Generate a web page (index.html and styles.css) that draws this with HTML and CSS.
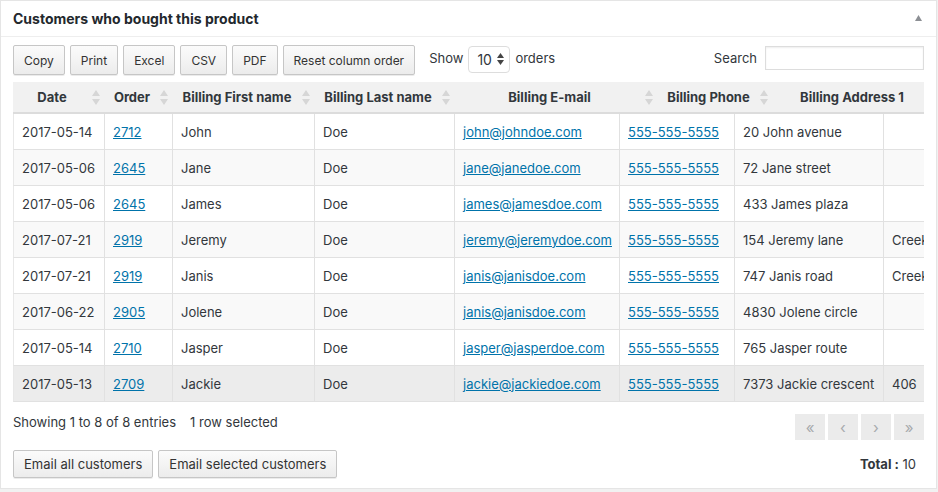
FILE: index.html
```html
<!DOCTYPE html>
<html lang="en">
<head>
<meta charset="utf-8">
<title>Customers who bought this product</title>
<link rel="stylesheet" href="styles.css">
</head>
<body>
<div class="postbox">
  <div class="hndle">
    <h2 class="hndle-title">Customers who bought this product</h2>
    <svg class="toggle" width="7" height="6" viewBox="0 0 7 6"><polygon points="0,6 3.5,0 7,6" fill="#8c8f94"/></svg>
  </div>
  <div class="inside">
    <div class="toolbar">
      <div class="dt-buttons">
        <button class="btn">Copy</button>
        <button class="btn">Print</button>
        <button class="btn">Excel</button>
        <button class="btn">CSV</button>
        <button class="btn">PDF</button>
        <button class="btn">Reset column order</button>
      </div>
      <div class="length">
        <span>Show</span>
        <div class="select"><span>10</span>
          <svg width="7" height="12" viewBox="0 0 7 12"><polygon points="0,5 3.5,0 7,5" fill="#444"/><polygon points="0,7 7,7 3.5,12" fill="#444"/></svg>
        </div>
        <span>orders</span>
      </div>
      <div class="filter">
        <span>Search</span>
        <input class="search" type="text">
      </div>
    </div>

    <div class="scroll">
      <table class="head-table">
        <colgroup>
          <col class="h1"><col class="h2"><col class="h3"><col class="h4"><col class="h5"><col class="h6"><col class="h7"><col class="h8">
        </colgroup>
        <thead>
          <tr>
            <th><div class="th-in"><span class="lbl">Date</span><svg class="sort" width="8" height="15" viewBox="0 0 8 15"><polygon points="0,6 4,0 8,6" /><polygon points="0,9 8,9 4,15"/></svg></div></th>
            <th><div class="th-in"><span class="lbl">Order</span><svg class="sort" width="8" height="15" viewBox="0 0 8 15"><polygon points="0,6 4,0 8,6" /><polygon points="0,9 8,9 4,15"/></svg></div></th>
            <th><div class="th-in"><span class="lbl">Billing First name</span><svg class="sort" width="8" height="15" viewBox="0 0 8 15"><polygon points="0,6 4,0 8,6" /><polygon points="0,9 8,9 4,15"/></svg></div></th>
            <th><div class="th-in"><span class="lbl">Billing Last name</span><svg class="sort" width="8" height="15" viewBox="0 0 8 15"><polygon points="0,6 4,0 8,6" /><polygon points="0,9 8,9 4,15"/></svg></div></th>
            <th><div class="th-in"><span class="lbl">Billing E-mail</span><svg class="sort" width="8" height="15" viewBox="0 0 8 15"><polygon points="0,6 4,0 8,6" /><polygon points="0,9 8,9 4,15"/></svg></div></th>
            <th><div class="th-in"><span class="lbl">Billing Phone</span><svg class="sort" width="8" height="15" viewBox="0 0 8 15"><polygon points="0,6 4,0 8,6" /><polygon points="0,9 8,9 4,15"/></svg></div></th>
            <th><div class="th-in"><span class="lbl">Billing Address 1</span><svg class="sort" width="8" height="15" viewBox="0 0 8 15"><polygon points="0,6 4,0 8,6" /><polygon points="0,9 8,9 4,15"/></svg></div></th>
            <th></th>
          </tr>
        </thead>
      </table>
      <table class="body-table">
        <colgroup>
          <col class="c1"><col class="c2"><col class="c3"><col class="c4"><col class="c5"><col class="c6"><col class="c7"><col class="c8">
        </colgroup>
        <tbody>
          <tr><td>2017-05-14</td><td><a href="#">2712</a></td><td>John</td><td>Doe</td><td><a href="#">john@johndoe.com</a></td><td><a href="#">555-555-5555</a></td><td>20 John avenue</td><td></td></tr>
          <tr class="alt"><td>2017-05-06</td><td><a href="#">2645</a></td><td>Jane</td><td>Doe</td><td><a href="#">jane@janedoe.com</a></td><td><a href="#">555-555-5555</a></td><td>72 Jane street</td><td></td></tr>
          <tr><td>2017-05-06</td><td><a href="#">2645</a></td><td>James</td><td>Doe</td><td><a href="#">james@jamesdoe.com</a></td><td><a href="#">555-555-5555</a></td><td>433 James plaza</td><td></td></tr>
          <tr class="alt"><td>2017-07-21</td><td><a href="#">2919</a></td><td>Jeremy</td><td>Doe</td><td><a href="#">jeremy@jeremydoe.com</a></td><td><a href="#">555-555-5555</a></td><td>154 Jeremy lane</td><td>Creek</td></tr>
          <tr><td>2017-07-21</td><td><a href="#">2919</a></td><td>Janis</td><td>Doe</td><td><a href="#">janis@janisdoe.com</a></td><td><a href="#">555-555-5555</a></td><td>747 Janis road</td><td>Creek</td></tr>
          <tr class="alt"><td>2017-06-22</td><td><a href="#">2905</a></td><td>Jolene</td><td>Doe</td><td><a href="#">janis@janisdoe.com</a></td><td><a href="#">555-555-5555</a></td><td>4830 Jolene circle</td><td></td></tr>
          <tr><td>2017-05-14</td><td><a href="#">2710</a></td><td>Jasper</td><td>Doe</td><td><a href="#">jasper@jasperdoe.com</a></td><td><a href="#">555-555-5555</a></td><td>765 Jasper route</td><td></td></tr>
          <tr class="selected"><td>2017-05-13</td><td><a href="#">2709</a></td><td>Jackie</td><td>Doe</td><td><a href="#">jackie@jackiedoe.com</a></td><td><a href="#">555-555-5555</a></td><td>7373 Jackie crescent</td><td>406</td></tr>
        </tbody>
      </table>
    </div>

    <div class="footer-row">
      <div class="info">Showing 1 to 8 of 8 entries<span class="sel">1 row selected</span></div>
      <div class="paginate">
        <span class="pg">«</span>
        <span class="pg">‹</span>
        <span class="pg">›</span>
        <span class="pg">»</span>
      </div>
    </div>

    <div class="actions-row">
      <div class="actions">
        <button class="btn btn-lg">Email all customers</button>
        <button class="btn btn-lg">Email selected customers</button>
      </div>
      <div class="total"><b>Total :</b> 10</div>
    </div>
  </div>
</div>
</body>
</html>
```
FILE: styles.css
```css
* { box-sizing: border-box; }

body {
  margin: 0;
  background: #f1f1f1;
  font-family: Inter, "Liberation Sans", Arial, sans-serif;
  font-size: 13px;
  color: #32373c;
}

.postbox {
  width: 937px;
  background: #fff;
  border: 1px solid #e5e5e5;
}

.hndle {
  height: 36px;
  border-bottom: 1px solid #eee;
  display: flex;
  align-items: center;
  justify-content: space-between;
  padding: 0 14px 0 12px;
}

.hndle-title {
  margin: 0;
  font-size: 14px;
  font-weight: 700;
  color: #23282d;
}

.toggle { display: block; margin-top: -2px; }

.inside {
  padding: 8px 12px 10px 12px;
}

.toolbar {
  display: flex;
  align-items: center;
  height: 30px;
  margin-bottom: 7px;
}

.dt-buttons { display: flex; gap: 5px; }

.btn {
  font-family: inherit;
  font-size: 12px;
  color: #333;
  height: 30px;
  padding: 0 10px;
  border: 1px solid #c6c6c6;
  border-radius: 2px;
  background: linear-gradient(to bottom, #fbfbfb 0%, #ececec 100%);
  box-shadow: 0 1px 0 rgba(0,0,0,0.08);
}

.length {
  display: flex;
  align-items: center;
  margin-left: 14px;
  gap: 5px;
  margin-top: -4px;
}

.select {
  width: 42px;
  height: 27px;
  border: 1px solid #ddd;
  border-radius: 4px;
  display: flex;
  align-items: center;
  justify-content: space-between;
  padding: 0 5px 0 8px;
  font-size: 14px;
  color: #32373c;
  margin-top: 2px;
}

.select svg { display: block; }

.filter {
  margin-left: auto;
  display: flex;
  align-items: center;
  gap: 8px;
  margin-top: -4px;
}

.search {
  width: 159px;
  height: 24px;
  border: 1px solid #ddd;
  box-shadow: inset 0 1px 2px rgba(0,0,0,0.07);
  background: #fff;
  font-family: inherit;
}

.scroll {
  width: 100%;
  overflow: hidden;
}

table {
  border-collapse: separate;
  border-spacing: 0;
  table-layout: fixed;
}

.head-table { width: 1082px; }
.h1 { width: 92px; }
.h2 { width: 68px; }
.h3 { width: 142px; }
.h4 { width: 140px; }
.h5 { width: 203px; }
.h6 { width: 115px; }
.h7 { width: 172px; }
.h8 { width: 150px; }

.head-table th {
  background: #f1f1f1;
  border-bottom: 2px solid #dcdcdc;
  height: 32px;
  padding: 0 5px 0 7px;
  font-weight: 700;
  font-size: 13px;
  color: #32373c;
  white-space: nowrap;
  overflow: hidden;
}

.th-in {
  display: flex;
  align-items: center;
}

.lbl {
  flex: 1;
  text-align: center;
  margin-right: 8px;
}

.sort { display: block; flex: none; }
.sort polygon { fill: #d6d6d6; }

.body-table { width: 1021px; }
.c1 { width: 92px; }
.c2 { width: 68px; }
.c3 { width: 142px; }
.c4 { width: 140px; }
.c5 { width: 165px; }
.c6 { width: 115px; }
.c7 { width: 149px; }
.c8 { width: 150px; }

.body-table td {
  height: 36px;
  padding: 0 8px;
  border-right: 1px solid #e1e1e1;
  border-bottom: 1px solid #e1e1e1;
  white-space: nowrap;
  overflow: hidden;
}

.body-table td:first-child { border-left: 1px solid #e8e8e8; }

.body-table tr.alt td { background: #f9f9f9; }
.body-table tr.selected td { background: #ececec; }

a { color: #0073aa; text-decoration: underline; }

.footer-row {
  display: flex;
  justify-content: space-between;
  align-items: flex-start;
  margin-top: 12px;
}

.info { margin-top: -1px; line-height: 18px; }
.sel { margin-left: 14px; }

.paginate { display: flex; gap: 3px; }

.pg {
  width: 30px;
  height: 26px;
  background: #ebebeb;
  color: #a7aaad;
  display: flex;
  align-items: center;
  justify-content: center;
  font-size: 15px;
}

.actions-row {
  display: flex;
  justify-content: space-between;
  align-items: center;
  margin-top: 10px;
}

.actions { display: flex; gap: 5px; }

.btn-lg {
  font-size: 13px;
  height: 28px;
  padding: 0 10px;
}

.total {
  font-size: 13px;
  margin-right: 8px;
  color: #32373c;
}

.total b { font-weight: 700; }
```
